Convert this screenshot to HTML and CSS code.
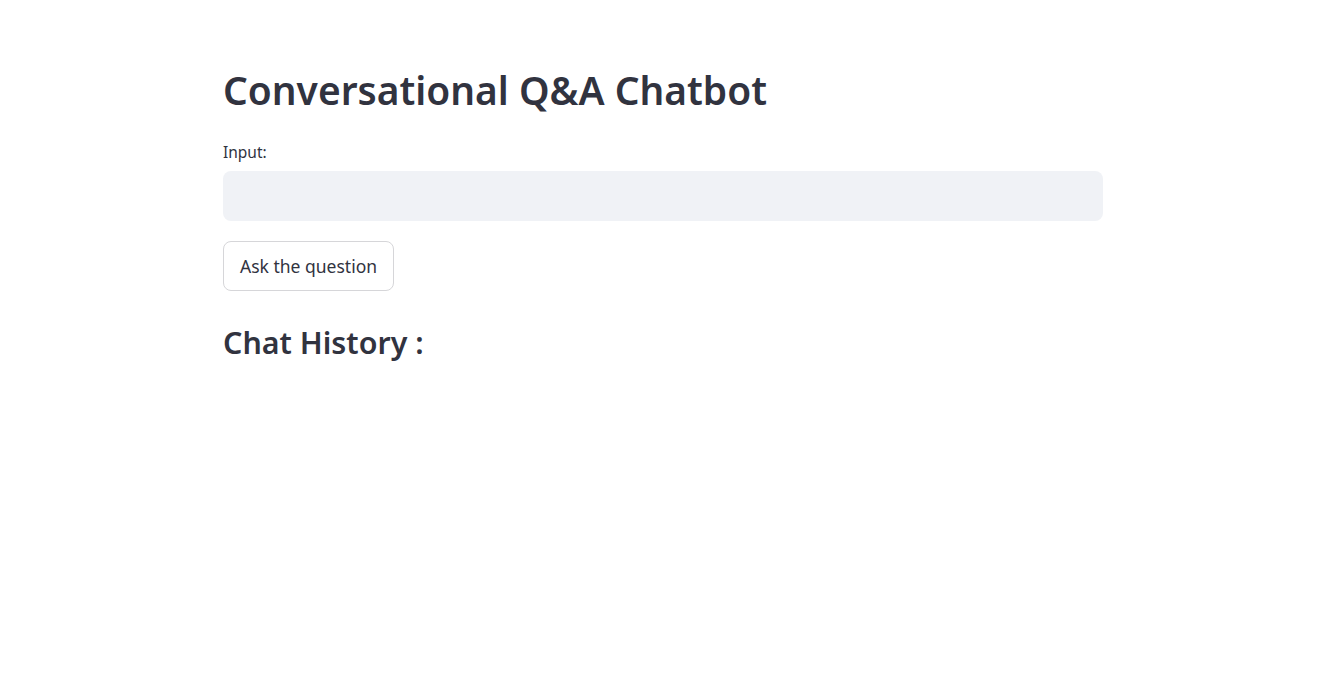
FILE: index.html
```html
<!DOCTYPE html>
<html>
<head>
<meta charset="utf-8">
<link rel="stylesheet" href="styles.css">
</head>
<body>
<main class="app">
  <div class="block">
    <h1 class="title">Conversational Q&amp;A Chatbot</h1>
    <div class="field">
      <label class="label" for="q">Input:</label>
      <input class="input" id="q" type="text">
    </div>
    <button class="btn">Ask the question</button>
    <h3 class="subtitle">Chat History :</h3>
  </div>
</main>
</body>
</html>
```
FILE: styles.css
```css
html, body {
  margin: 0;
  padding: 0;
  background: #ffffff;
}
body {
  font-family: "Noto Sans", "Open Sans", sans-serif;
  color: #31333f;
}
.app {
  display: flex;
  justify-content: center;
  padding-left: 5px;
}
.block {
  width: 880px;
  padding-top: 60px;
  display: flex;
  flex-direction: column;
}
.title {
  margin: 0;
  font-size: 38.9px;
  font-weight: 600;
  line-height: 60px;
}
.field {
  margin-top: 22px;
  display: flex;
  flex-direction: column;
}
.label {
  font-size: 15.5px;
  line-height: 20px;
  height: 29px;
}
.input {
  height: 50px;
  box-sizing: border-box;
  border: none;
  border-radius: 8px;
  background: #f0f2f6;
  outline: none;
  font-family: inherit;
  font-size: 16px;
  padding: 0 12px;
}
.btn {
  margin-top: 20px;
  align-self: flex-start;
  height: 50px;
  box-sizing: border-box;
  padding: 0 16px;
  border: 1px solid #d6d6d9;
  border-radius: 8px;
  background: #ffffff;
  color: #31333f;
  font-family: inherit;
  font-size: 17.5px;
}
.subtitle {
  margin: 30px 0 0;
  font-size: 30.4px;
  font-weight: 600;
  line-height: 44px;
}
```
